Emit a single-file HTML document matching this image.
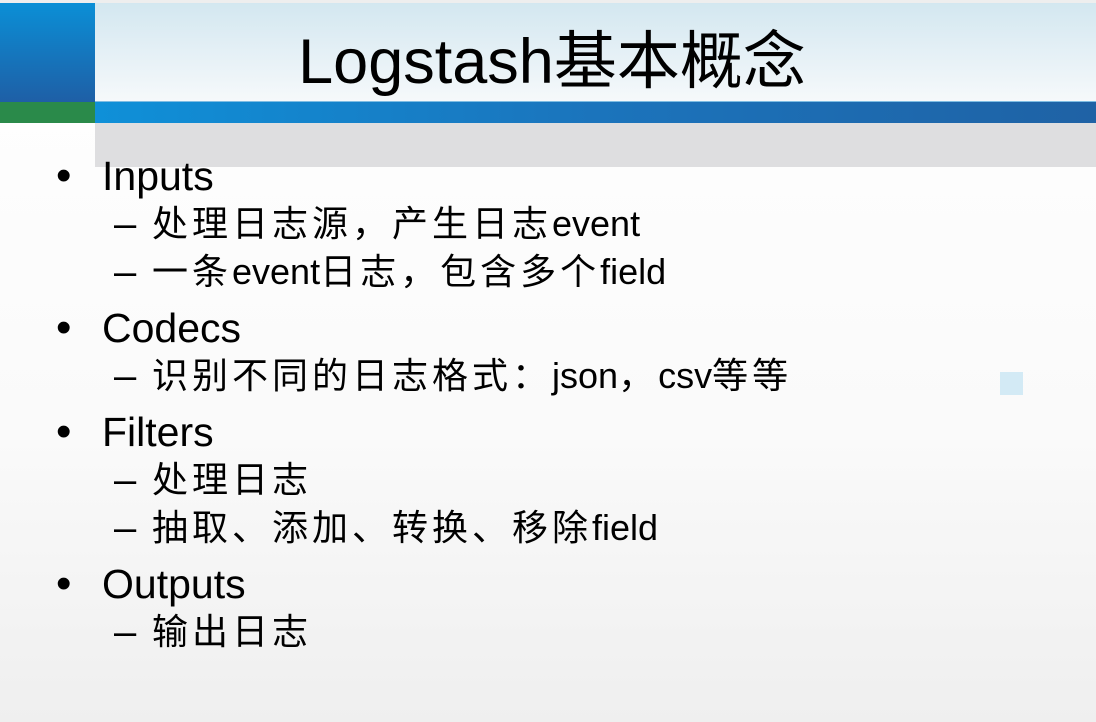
<!DOCTYPE html>
<html><head><meta charset="utf-8"><style>
html,body{margin:0;padding:0}
body{width:1096px;height:722px;position:relative;overflow:hidden;background:linear-gradient(#ffffff 0%,#fafafa 60%,#efefef 100%);font-family:"Liberation Sans","Noto Sans CJK SC",sans-serif;color:#000}
.a{position:absolute}
.l1{position:absolute;left:102px;font-size:41px;line-height:1;white-space:nowrap}
.b{position:absolute;left:56px;font-size:44px;line-height:1}
.d{position:absolute;left:114px;font-size:40px;line-height:1}
.l2{position:absolute;left:152px;font-size:36px;line-height:1;white-space:nowrap}
.k{letter-spacing:4px}
</style></head><body>
<div class="a" style="left:0;top:0;width:1096px;height:3px;background:#eeeeee"></div>
<div class="a" style="left:0;top:3px;width:95px;height:99px;background:linear-gradient(#0b8fd6,#1e5fa6)"></div>
<div class="a" style="left:0;top:102px;width:95px;height:21px;background:#2a8a4a"></div>
<div class="a" style="left:95px;top:3px;width:1001px;height:99px;background:linear-gradient(#d3e7f0,#f6f9fb)"></div>
<div class="a" style="left:95px;top:101px;width:1001px;height:1px;background:#7fbde3"></div>
<div class="a" style="left:95px;top:102px;width:1001px;height:21px;background:linear-gradient(90deg,#0f90d8,#1b74bc 50%,#1f62a5)"></div>
<div class="a" style="left:95px;top:123px;width:1001px;height:44px;background:#dedee0"></div>
<div class="a" style="left:1000px;top:372px;width:23px;height:23px;background:#d3eaf5"></div>
<div class="a" style="left:0;width:1096px;top:22px;text-align:center;font-size:63px;line-height:80px;padding-left:4px">Logstash基本概念</div>

<div class="b" style="top:154px">•</div><div class="l1" style="top:156px">Inputs</div>
<div class="d" style="top:204px">–</div><div class="l2" style="top:206px"><span class="k">处理日志源，产生日志</span>event</div>
<div class="d" style="top:252px">–</div><div class="l2" style="top:254px"><span class="k">一条</span>event<span class="k">日志，包含多个</span>field</div>
<div class="b" style="top:306px">•</div><div class="l1" style="top:308px">Codecs</div>
<div class="d" style="top:356px">–</div><div class="l2" style="top:358px"><span class="k">识别不同的日志格式：</span>json<span class="k">，</span>csv<span class="k">等等</span></div>
<div class="b" style="top:410px">•</div><div class="l1" style="top:412px">Filters</div>
<div class="d" style="top:460px">–</div><div class="l2" style="top:462px"><span class="k">处理日志</span></div>
<div class="d" style="top:508px">–</div><div class="l2" style="top:510px"><span class="k">抽取、添加、转换、移除</span>field</div>
<div class="b" style="top:562px">•</div><div class="l1" style="top:564px">Outputs</div>
<div class="d" style="top:612px">–</div><div class="l2" style="top:614px"><span class="k">输出日志</span></div>
</body></html>
